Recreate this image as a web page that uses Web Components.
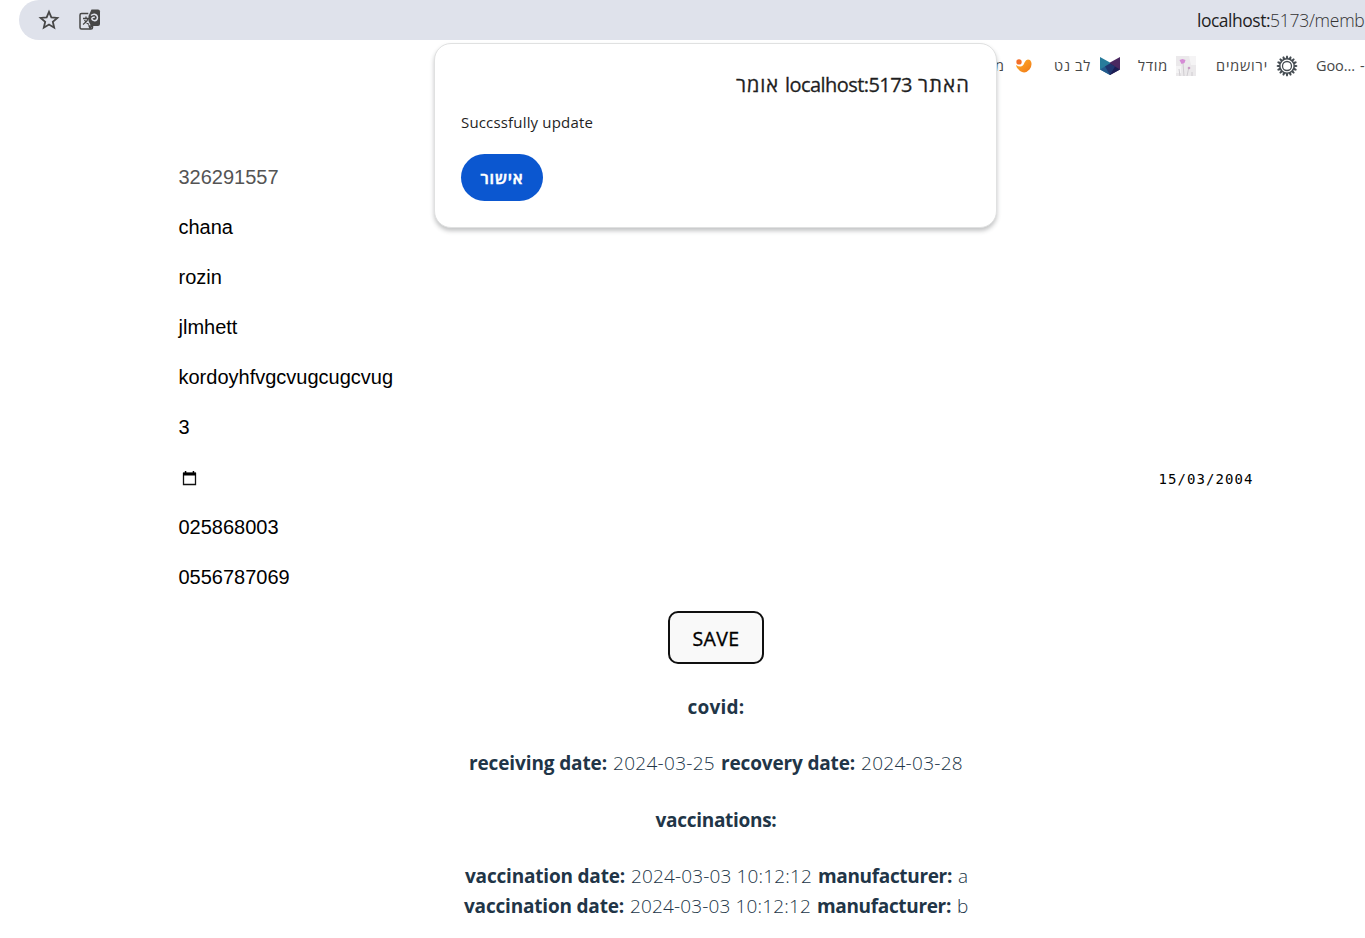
<!DOCTYPE html>
<html lang="he">
<head>
<meta charset="utf-8">
<title>Member</title>
<style>
html,body{margin:0;height:938px;overflow:hidden;background:#fff}
body{font-family:"Open Sans","Noto Sans","Liberation Sans",sans-serif;position:relative}
</style>
</head>
<body>
<member-page></member-page>
<script>
// A single run of text whose tracking is set so that it fills the width in "w".
class FitText extends HTMLElement{
  constructor(){super();this.attachShadow({mode:'open'}).innerHTML='<style>:host{display:inline-block;white-space:pre;flex:none}</style><slot></slot>';}
  connectedCallback(){
    const w=+this.getAttribute('w');if(!w)return;
    const n=[...this.textContent].length;
    const nat=this.getBoundingClientRect().width;
    this.style.letterSpacing=((w-nat)/n)+'px';
  }
}
class AddressBar extends HTMLElement{
  constructor(){super();this.attachShadow({mode:'open'}).innerHTML=`<style>
  :host{display:flex;align-items:center;height:40px;margin-left:19px;padding-left:19px;box-sizing:border-box;background:#dfe2eb;border-radius:20px 0 0 20px;overflow:hidden;color:#474747;font-size:17.5px}
  svg{flex:none;display:block}.tr{margin-left:16.500px}
  .url{margin-left:auto;width:168px;white-space:nowrap;line-height:24px;flex:none}
  .host{color:#1f1f1f}.path{font-weight:300;color:#333}</style>
  <svg width="22" height="22" viewBox="0 0 22 22"><path d="M11 2.8l2.35 5.55 6 .5-4.55 3.95 1.38 5.85L11 15.55l-5.18 3.1L7.2 12.8 2.65 8.85l6-.5z" fill="none" stroke="#474747" stroke-width="1.8"/></svg>
  <svg class="tr" width="24" height="24" viewBox="0 0 24 24"><path d="M11.3 5.500H4.5Q3 5.500 3 7V19.500Q3 21 4.500 21H14Q15.500 21 15.500 19.500V17" fill="none" stroke="#474747" stroke-width="1.5"/><path d="M14.500 1.500H21Q23 1.500 23 3.500V16Q23 18 21 18H14L11.500 13V8Z" fill="#474747"/><path d="M6 10.500H12M9 8.500V10.500M11 11Q10 14 6 16.500M7.500 12Q9 15 12 16.500M12 18h3l-2 2.500z" fill="none" stroke="#474747" stroke-width="1.300"/><path d="M14 7.500Q15.500 6 17.500 6.200Q20.300 6.700 20.500 9.600Q20.200 12.500 17.600 12.700Q15 12.500 14.800 10.500Q15.200 8.900 17.800 9.300" fill="none" stroke="#dfe2eb" stroke-width="1.400"/></svg>
  <div class="url"><fit-text class="host" w="73">localhost:</fit-text><fit-text class="path" w="94.5">5173/memb</fit-text></div>`;}
}
class BookmarkItem extends HTMLElement{
  constructor(){super();this.attachShadow({mode:'open'}).innerHTML='<style>:host{display:flex;align-items:center;gap:8px;flex:none}::slotted(svg){display:block;flex:none}</style><slot></slot>';}
}
class BookmarksBar extends HTMLElement{
  constructor(){super();
  let teeth='';for(let i=0;i<16;i++)teeth+=`<path d="M10.200 .8h1.600l.5 3h-2.600z" transform="rotate(${i*22.5} 11 11)"/>`;
  this.attachShadow({mode:'open'}).innerHTML=`<style>
  :host{display:flex;align-items:center;height:50px;padding:1px 0 0 995px;box-sizing:border-box;color:#474747;font-size:14.500px;line-height:20px;white-space:nowrap;overflow:hidden}
  </style>
  <bookmark-item><fit-text w="11">מ</fit-text><svg width="20" height="20" viewBox="0 0 20 20"><defs><linearGradient id="o" x2="1" y2="1"><stop stop-color="#ffb12b"/><stop offset="1" stop-color="#f07818"/></linearGradient></defs><circle cx="5" cy="5.900" r="2.700" fill="#f36e28"/><path d="M2 9Q8.500 13 10.500 6.500Q12.500 2 16 4Q19.500 8 15.500 13.500Q11 18.500 6 15Q2.500 12.500 2 9Z" fill="url(#o)"/></svg></bookmark-item>
  <bookmark-item style="margin-left:20px"><fit-text w="37">לב נט</fit-text><svg width="22" height="22" viewBox="0 0 22 22"><path d="M1 2l10 5.500v12.500L1 14.500z" fill="#287c9b"/><path d="M21 2L11 7.500V20l10-5.500z" fill="#4b2860"/><path d="M1 14.500l10-6V20z" fill="#245a8c"/><path d="M21 14.500l-10-6V20z" fill="#1c1e54"/><path d="M11 8.500l5 2.900-5 8.600-5-8.600z" fill="#20366f"/></svg></bookmark-item>
  <bookmark-item style="margin-left:17px"><fit-text w="30">מודל</fit-text><svg width="20" height="20" viewBox="0 0 20 20"><path fill="#ebe9eb" d="M0 0h20v20H0z"/><path d="M13 0h7v9h-5zM0 10h5v7H0z" fill="#f5f4f5"/><path d="M7 7l1 13M12.500 13L11 20M3 13l1 7M16 16v4" stroke="#c8c4c9" stroke-width=".8" fill="none"/><path d="M3.500 4l3-1 3 1-1 3-3 1z" fill="#d58ad5"/><circle cx="13" cy="12" r="1.300" fill="#c99bc5"/></svg></bookmark-item>
  <bookmark-item style="margin-left:20px"><fit-text w="52">ירושמים</fit-text><svg width="22" height="22" viewBox="0 0 22 22" fill="#454c52">${teeth}<circle cx="11" cy="11" r="7.200" fill="#fff" stroke="#454c52" stroke-width="1.500"/><circle cx="11" cy="11" r="4.500" fill="none" stroke="#454c52" stroke-width="1.300"/></svg></bookmark-item>
  <bookmark-item style="margin-left:18px;gap:5px"><fit-text w="39">Goo...</fit-text><fit-text>-</fit-text></bookmark-item>`;}
}
class AlertDialog extends HTMLElement{
  constructor(){super();this.attachShadow({mode:'open'}).innerHTML=`<style>
  :host{position:absolute;left:434px;top:43px;width:563px;height:185px;box-sizing:border-box;border:1.500px solid #e0e1e1;border-radius:17px;background:#fff;box-shadow:0 3px 4px rgba(60,64,67,.3);padding:27px 26px 0 26px;display:flex;flex-direction:column;color:#1f1f1f}
  .h{direction:rtl;display:flex;gap:6px;font-size:20px;line-height:28px;white-space:nowrap;-webkit-text-stroke:.3px #1f1f1f}
  .m{font-size:15px;line-height:22px;margin-top:12px}
  button{margin:21px 0 0;padding:1px 0 0;width:82px;height:47px;border:0;border-radius:24px;background:#0b57d0;color:#fff;font:600 16px/46px "Open Sans","Noto Sans",sans-serif;-webkit-text-stroke:.5px #fff}
  </style><div class="h"><fit-text w="52">האתר</fit-text><fit-text w="127">localhost:5173</fit-text><fit-text w="43">אומר</fit-text></div><div class="m"><fit-text w="132">Succssfully update</fit-text></div><button><fit-text w="43">אישור</fit-text></button>`;}
}
class FieldRow extends HTMLElement{
  constructor(){super();this.attachShadow({mode:'open'}).innerHTML=`<style>
  :host{display:flex;align-items:center;justify-content:space-between;height:50px;font:20px/24px "Liberation Sans",Arial,sans-serif;color:#000}
  :host([muted]){color:#545454}</style><slot></slot>`;}
}
class SaveButton extends HTMLElement{
  constructor(){super();this.attachShadow({mode:'open'}).innerHTML=`<style>
  :host{display:block;align-self:center;margin-top:9px}
  button{display:block;box-sizing:border-box;width:96px;height:53px;padding:2px 0 0;border:2px solid #101010;border-radius:10px;background:#f9f9f9;color:#000;font:400 19.500px/28px "Open Sans","Noto Sans",sans-serif;-webkit-text-stroke:.35px #000}
  </style><button><slot></slot></button>`;}
}
class RecordLine extends HTMLElement{
  constructor(){super();this.attachShadow({mode:'open'}).innerHTML=`<style>
  :host{display:flex;justify-content:center;gap:6px;font-size:19px;line-height:30px;height:30px;font-weight:300;color:#213547}
  ::slotted(b){font-weight:700}</style><slot></slot>`;}
}
class MemberPage extends HTMLElement{
  constructor(){super();this.attachShadow({mode:'open'}).innerHTML=`<style>
  :host{display:block}
  main{display:flex;flex-direction:column;width:1075px;margin:62px 0 0 178.500px}
  b{font-weight:700}
  .date{font:14px/20px "DejaVu Sans Mono",monospace;padding-top:3px}
  .cal{margin:1px 0 0 3.500px}
  .rec{display:flex;flex-direction:column;gap:26.400px;margin-top:27.800px}
  </style>
  <address-bar></address-bar><bookmarks-bar></bookmarks-bar>
  <main>
  <field-row muted>326291557</field-row><field-row>chana</field-row><field-row>rozin</field-row><field-row>jlmhett</field-row><field-row>kordoyhfvgcvugcugcvug</field-row><field-row>3</field-row>
  <field-row><svg class="cal" width="15" height="16" viewBox="0 0 15 16"><path d="M1.500 3.500h12v11h-12z" fill="none" stroke="#111" stroke-width="1.300"/><path d="M1 2.500h13V5.500H1zM2.800 1h1.500v2H2.800zM10.700 1h1.500v2h-1.500z"/></svg><fit-text class="date" w="95">15/03/2004</fit-text></field-row>
  <field-row>025868003</field-row><field-row>0556787069</field-row>
  <save-button><fit-text w="47">SAVE</fit-text></save-button>
  <div class="rec">
  <record-line><b><fit-text w="57">covid:</fit-text></b></record-line>
  <record-line><b><fit-text w="138">receiving date:</fit-text></b><fit-text w="102">2024-03-25</fit-text><b><fit-text w="134">recovery date:</fit-text></b><fit-text w="102">2024-03-28</fit-text></record-line>
  <record-line><b><fit-text w="121">vaccinations:</fit-text></b></record-line>
  <div>
  <record-line><b><fit-text w="160">vaccination date:</fit-text></b><fit-text w="181">2024-03-03 10:12:12</fit-text><b><fit-text w="134">manufacturer:</fit-text></b><fit-text w="9">a</fit-text></record-line>
  <record-line><b><fit-text w="160">vaccination date:</fit-text></b><fit-text w="181">2024-03-03 10:12:12</fit-text><b><fit-text w="134">manufacturer:</fit-text></b><fit-text w="11">b</fit-text></record-line>
  </div></div></main>
  <alert-dialog></alert-dialog>`;}
}
customElements.define('address-bar',AddressBar);
customElements.define('bookmark-item',BookmarkItem);
customElements.define('bookmarks-bar',BookmarksBar);
customElements.define('alert-dialog',AlertDialog);
customElements.define('field-row',FieldRow);
customElements.define('save-button',SaveButton);
customElements.define('record-line',RecordLine);
customElements.define('member-page',MemberPage);
customElements.define('fit-text',FitText);
</script>
</body>
</html>
